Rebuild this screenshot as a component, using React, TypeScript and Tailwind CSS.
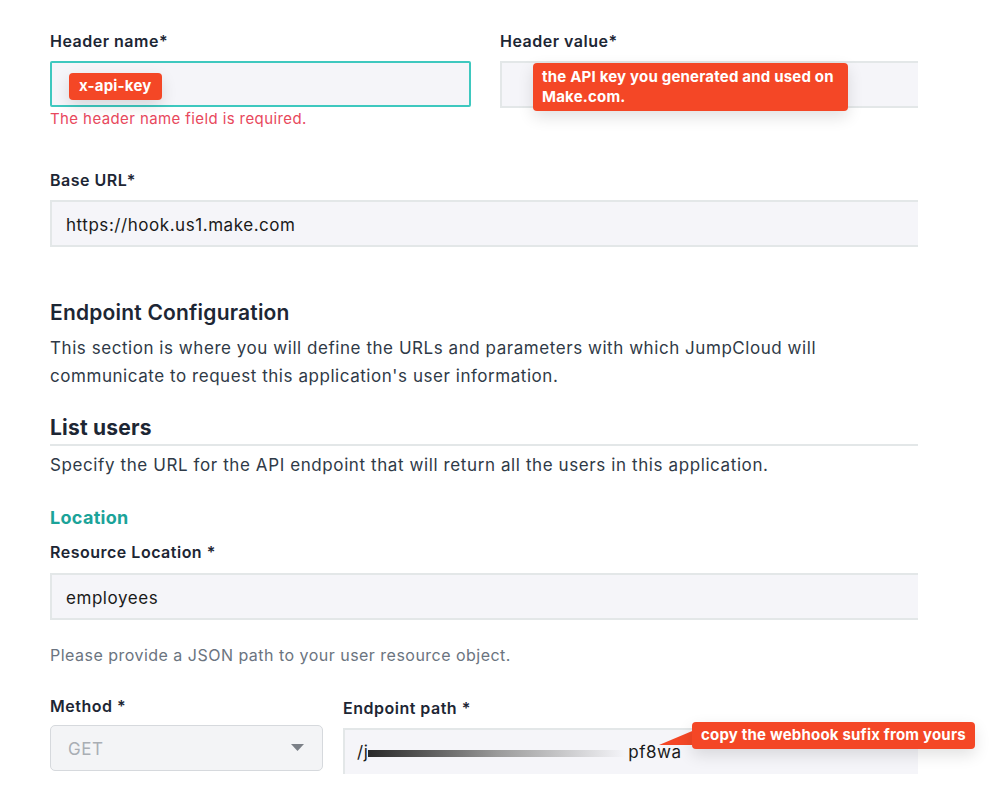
import { ReactNode } from "react";

const font = { fontFamily: "Inter, 'Noto Sans', sans-serif" };

const Label = ({ children, className = "" }: { children: ReactNode; className?: string }) => (
  <div className={`text-[16px] leading-6 font-semibold tracking-[0.5px] text-[#1d2634] ${className}`}>{children}</div>
);

// inputs are cut at the right edge of the screenshot, so no right border
const Field = ({ children, className = "" }: { children?: ReactNode; className?: string }) => (
  <div
    className={`relative h-[47px] flex items-center pl-[14px] pt-[4px] bg-[#f5f5f9] border-y-2 border-l-2 border-[#e3e7e8] text-[17px] tracking-[0.55px] text-[#1a1a1a] ${className}`}
  >
    {children}
  </div>
);

const Callout = ({ children, className = "" }: { children: ReactNode; className?: string }) => (
  <div
    className={`absolute bg-[#f44726] text-white font-bold text-[15px] tracking-[0.2px] rounded-[4px] shadow-[0_6px_16px_rgba(0,0,0,0.12)] ${className}`}
  >
    {children}
  </div>
);

export default function App() {
  return (
    <div className="w-[999px] h-[796px] bg-white overflow-hidden" style={font}>
      <div className="ml-[50px] w-[868px] pt-[29px]">
        {/* header name / value */}
        <div className="grid grid-cols-[421px_418px] gap-x-[29px] items-start">
          <div>
            <Label className="mb-2">Header name*</Label>
            <div className="relative h-[46px] bg-[#f5f5f9] border-2 border-[#3ec8bf] rounded-[2px]">
              <Callout className="left-[17px] top-[10px] h-[27px] px-[10px] flex items-center">x-api-key</Callout>
            </div>
            <div className="mt-[1px] text-[15px] leading-[22px] tracking-[0.4px] text-[#e8485c]">The header name field is required.</div>
          </div>
          <div>
            <Label className="mb-2">Header value*</Label>
            <Field className="h-[46px]">
              <Callout className="left-[31px] top-0 w-[315px] h-[48px] pl-[9px] pt-[4px] leading-[20px]">
                the API key you generated and used on
                <br />
                Make.com.
              </Callout>
            </Field>
          </div>
        </div>

        {/* base url */}
        <Label className="mt-[38px] mb-2">Base URL*</Label>
        <Field>https://hook.us1.make.com</Field>

        {/* endpoint config */}
        <h2 className="mt-[51px] text-[21px] leading-[30px] font-semibold tracking-[0.2px] text-[#1d2634]">Endpoint Configuration</h2>
        <p className="mt-[6px] text-[17px] leading-[28px] tracking-[0.55px] text-[#2f3a47]">
          This section is where you will define the URLs and parameters with which JumpCloud will
          <br />
          communicate to request this application's user information.
        </p>

        <h3 className="mt-[23px] text-[21px] leading-[30px] font-bold tracking-[0.2px] text-[#1d2634]">List users</h3>
        <div className="mt-[1px] h-[2px] bg-[#e3e7e8]" />
        <p className="mt-[5px] text-[17px] leading-[28px] tracking-[0.6px] text-[#2f3a47]">
          Specify the URL for the API endpoint that will return all the users in this application.
        </p>

        <div className="mt-[26px] text-[18px] leading-[26px] font-bold tracking-[0.3px] text-[#1ba399]">Location</div>
        <Label className="mt-[9px] mb-[9px]">Resource Location *</Label>
        <Field>employees</Field>
        <p className="mt-[23px] text-[16px] leading-6 tracking-[0.48px] text-[#6b7480]">
          Please provide a JSON path to your user resource object.
        </p>

        {/* method / endpoint path */}
        <div className="mt-[27px] flex gap-[20px] items-start">
          <div className="w-[273px]">
            <Label className="mb-[7px]">Method *</Label>
            <div className="h-[46px] flex items-center justify-between pl-[17px] pr-[18px] pt-[3px] bg-[#f3f4f6] border border-[#d6d9dd] rounded-[5px]">
              <span className="text-[17px] tracking-[0.5px] text-[#a9aeb4]">GET</span>
              <svg width="13" height="8" viewBox="0 0 13 8" className="-mt-[3px]">
                <path d="M0 0h13L6.5 7z" fill="#7b8087" />
              </svg>
            </div>
          </div>
          <div className="flex-1 mt-[2px]">
            <Label className="mb-2">Endpoint path *</Label>
            <div className="relative h-[46px] flex items-center pl-[12px] pt-[2px] bg-[#f5f5f9] border-t-2 border-l-2 border-[#e3e7e8] text-[17px] tracking-[0.5px] text-[#1a1a1a]">
              <span>/j</span>
              <div className="w-[258px] h-[7px] mt-[1px] bg-gradient-to-r from-[#2a2a2a] via-[#9a9a9a] to-transparent" />
              <span className="ml-[2px]">pf8wa</span>
              <svg className="absolute left-[312px] top-[-1px]" width="40" height="20" viewBox="0 0 40 20">
                <path d="M40 0 L40 16 L2 16 Z" fill="#f44726" />
              </svg>
              <Callout className="left-[347px] top-[-8px] h-[27px] px-[9px] flex items-center whitespace-nowrap">
                copy the webhook sufix from yours
              </Callout>
            </div>
          </div>
        </div>
      </div>
    </div>
  );
}
